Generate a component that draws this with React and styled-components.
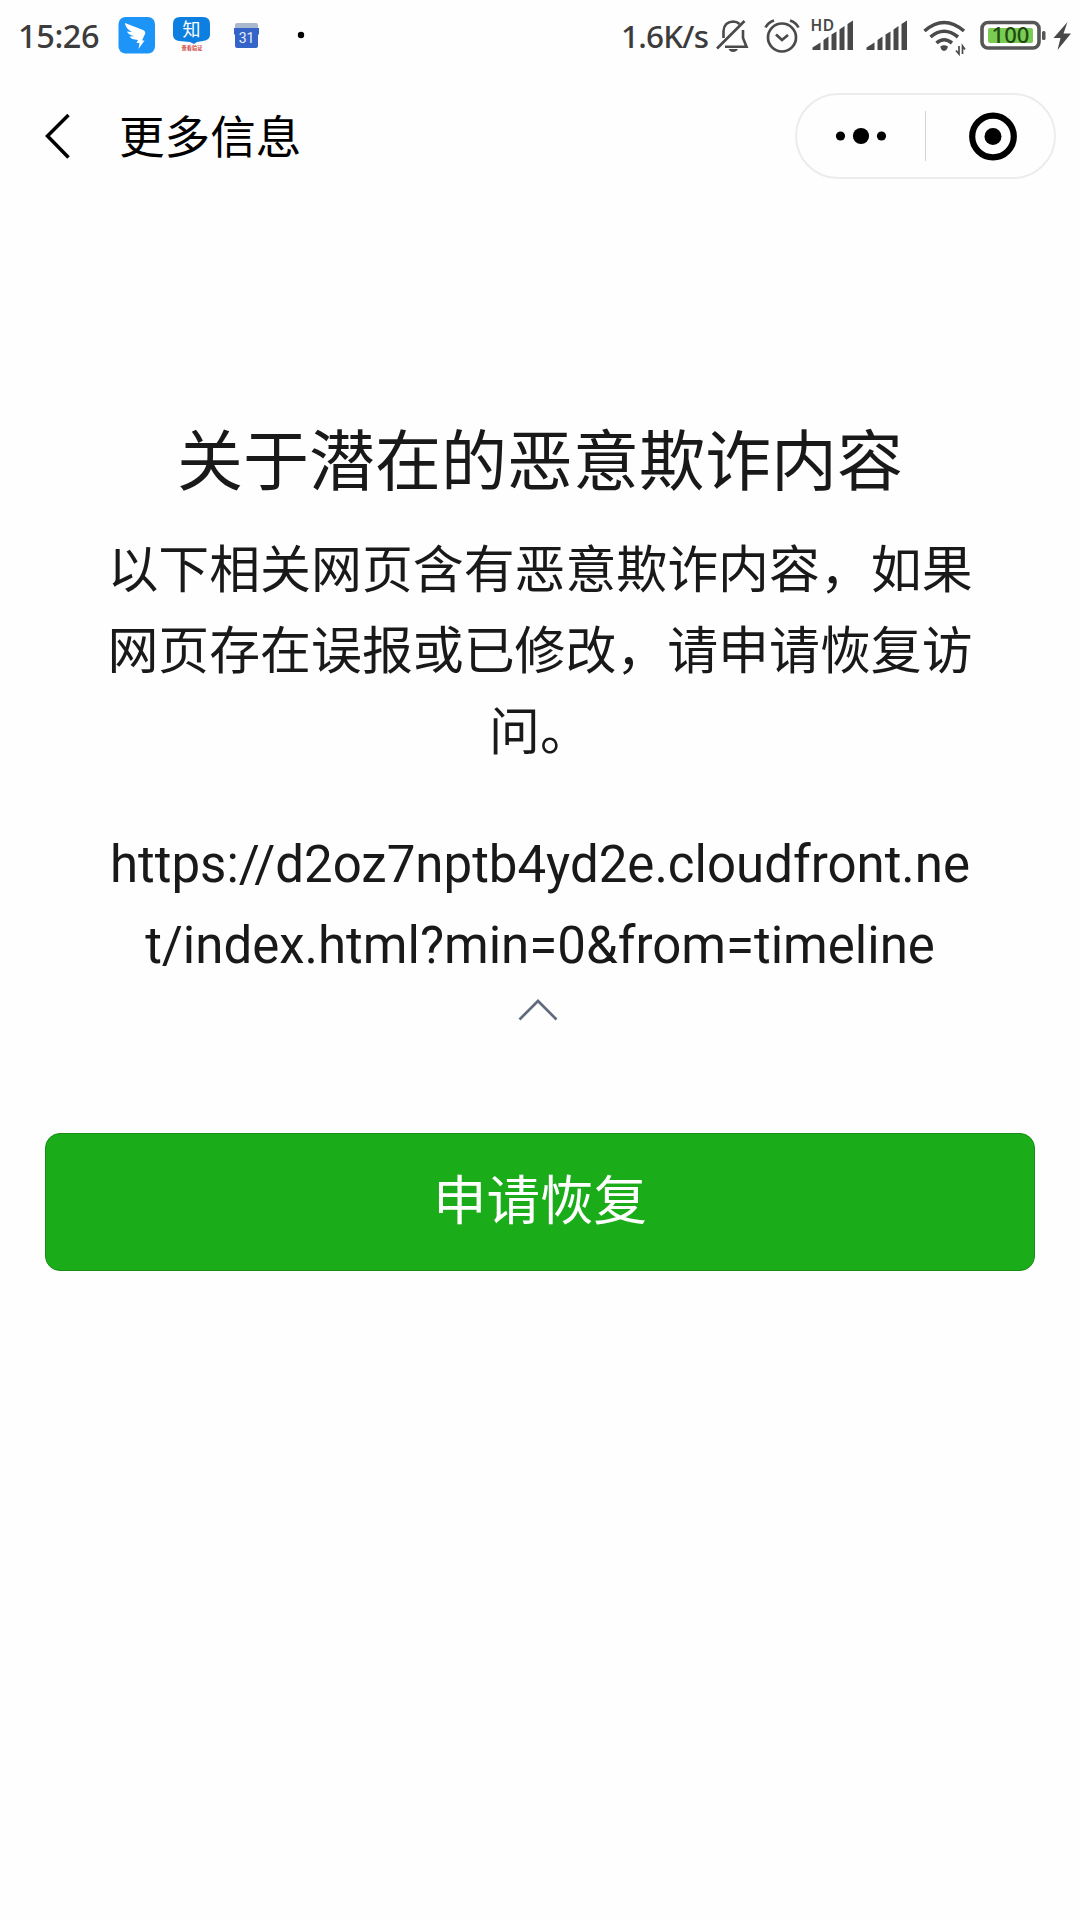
import React from "react";
import styled, { createGlobalStyle } from "styled-components";

const GlobalStyle = createGlobalStyle`
  * { box-sizing: border-box; }
  body { margin: 0; background: #fefefe; }
`;

const cjk = `"Noto Sans CJK SC", sans-serif`;

const Screen = styled.div`
  display: flex;
  flex-direction: column;
  width: 1080px;
  height: 1920px;
  background: #fefefe;
  font-family: Roboto, ${cjk};
  color: #191919;
`;

const StatusBar = styled.div`
  display: flex;
  justify-content: space-between;
  height: 72px;
  padding: 0 8px 0 18px;
`;

const StatusGroup = styled.div`
  display: flex;
  align-items: center;
  height: 72px;
`;

const StatusText = styled.span`
  width: ${(p) => p.$width}px;
  font: 500 ${(p) => p.$size}px/72px "Noto Sans", sans-serif;
  letter-spacing: ${(p) => p.$spacing}px;
  white-space: nowrap;
  color: #3c3c3c;
`;

const Glyph = styled.svg`
  display: block;
  flex: none;
  width: ${(p) => p.$width}px;
  height: 72px;
`;

const NavBar = styled.div`
  display: flex;
  align-items: center;
  height: 128px;
  padding: 0 24px 0 42px;
`;

const BackIcon = styled.svg`
  width: 32px;
  height: 50px;
`;

const NavTitle = styled.div`
  flex: 1;
  padding: 0 0 4px 45px;
  font: 400 45.6px/64px ${cjk};
  color: #000;
`;

const Capsule = styled.div`
  display: flex;
  align-items: center;
  width: 261px;
  height: 86px;
  border: 2px solid #ececec;
  border-radius: 43px;
`;

const CapsuleButton = styled.div`
  display: flex;
  justify-content: center;
  width: ${(p) => p.$width}px;
  padding-left: ${(p) => p.$shift || 0}px;
`;

const Divider = styled.div`
  width: 1px;
  height: 50px;
  background: #d4d4d4;
`;

const Main = styled.main`
  display: flex;
  flex-direction: column;
  align-items: center;
  padding: 208px 45px 0;
`;

const Title = styled.h1`
  margin: 0;
  font: 400 66px/96px ${cjk};
`;

const Message = styled.p`
  margin: 22px 0 0;
  font: 400 50.9px/81px ${cjk};
  text-align: center;
`;

const Line = styled.span`
  display: block;
  white-space: nowrap;
`;

const Url = styled.p`
  margin: 55px 0 0;
  font: 400 51px/81px Roboto, sans-serif;
  text-align: center;
`;

const Collapse = styled.svg`
  width: 42px;
  height: 26px;
  margin: 11px 4px 0 0;
`;

const RestoreButton = styled.button`
  width: 990px;
  height: 138px;
  margin: 110px 0 0;
  padding: 0 0 10px;
  border: 1px solid #178e17;
  border-radius: 15px;
  background: #1aad19;
  color: #fff;
  font: 400 53.5px/80px ${cjk};
`;

function DingTalk() {
  return (
    <Glyph $width={55} viewBox="100 0 55 72">
      <rect x="118.5" y="17" width="36.5" height="36.5" rx="7" fill="#1c94f8" />
      <path d="M125 23 L143 30 Q146 31.500 145 34 L142 40.500 H144.500 L138.500 49 L139.500 43 H136.500 L138 40 Q131 39.500 129.500 36.500 L134 36.300 Q128 34.500 127 31.500 L132 32 Q125 28 125 23Z" fill="#fff" />
    </Glyph>
  );
}

function Zhi() {
  return (
    <Glyph $width={63} viewBox="155 0 63 72">
      <path d="M180 17 H203 Q210 17 210 24 V35 Q210 40 203 41 L197 42 L194 44 L190 42 L179 41 Q173 40 173 35 V24 Q173 17 180 17Z" fill="#0d7fe0" />
      <text x="191.500" y="36" textAnchor="middle" fontSize="18" fontFamily="Noto Sans CJK SC" fill="#fff">知</text>
      <text x="192" y="50" textAnchor="middle" fontSize="5.200" fontWeight="700" fontFamily="Noto Sans CJK SC" fill="#d0473f">查看验证</text>
    </Glyph>
  );
}

function Calendar() {
  return (
    <Glyph $width={50} viewBox="218 0 50 72">
      <rect x="235" y="23" width="23" height="9" rx="2" fill="#a9b7cf" />
      <path d="M234 28 H259 V34 L258 35 V46 Q258 48 256 48 H237 Q235 48 235 46 V35 L234 34Z" fill="#3564c8" />
      <text x="246.500" y="43" textAnchor="middle" fontSize="14" fontFamily="Roboto" fill="#e8eefb">31</text>
    </Glyph>
  );
}

function Dot() {
  return (
    <Glyph $width={40} viewBox="268 0 40 72">
      <circle cx="301" cy="35" r="3.200" fill="#000" />
    </Glyph>
  );
}

function MutedBell() {
  return (
    <Glyph $width={42} viewBox="712 0 42 72" fill="none" stroke="#4a4a4a" strokeWidth="2.600">
      <path d="M723.500 38 V31 Q724 22 733 21.500 Q737 21.500 739.500 24" />
      <path d="M743 30 V38 L746.500 46.700 H725" />
      <path d="M717 48.500 L744.500 21" />
      <path d="M728.500 49 H738 Q736.500 52 733 52 Q730 52 728.500 49Z" fill="#4a4a4a" stroke="none" />
    </Glyph>
  );
}

function Alarm() {
  return (
    <Glyph $width={49} viewBox="754 0 49 72" fill="none" stroke="#4a4a4a" strokeWidth="2.700">
      <circle cx="782" cy="37.500" r="14" />
      <path d="M776 34.500 L782 40 L788 35" />
      <path d="M765.500 27.500 Q768 22.500 774 20.500" />
      <path d="M790 20.500 Q796 22.500 798.500 27.500" />
    </Glyph>
  );
}

function Bars({ hd }) {
  return (
    <Glyph $width={hd ? 53 : 55} viewBox={hd ? "-8 0 53 72" : "-9 0 55 72"} fill="#484848">
      <path d="M1.500 50 V47.500 L9.500 42.500 V50Z" />
      <path d="M12.500 50 V40 L17.500 36.500 V50Z" />
      <path d="M20.500 50 V34.500 L25.500 31.500 V50Z" />
      <path d="M28.500 50 V29.500 L33.500 26 V50Z" />
      <path d="M36.500 50 V24 L42 20.500 V50Z" />
      {hd && (
        <text x="-0.500" y="31.300" fontSize="15.500" fontWeight="600" letterSpacing="0.500" fontFamily="Noto Sans">
          HD
        </text>
      )}
    </Glyph>
  );
}

function Wifi() {
  return (
    <Glyph $width={63} viewBox="911 0 63 72" fill="none" stroke="#4a4a4a" strokeWidth="3.600">
      <path d="M924.500 31 Q944 14 964 31" />
      <path d="M930.500 37 Q944 25.500 958 37" />
      <path d="M936.500 43 Q944 36.500 952 43" />
      <path d="M940.300 46.500 Q944 43.800 948 46.500 Q947 50.500 944 51 Q941 50.500 940.300 46.500Z" fill="#4a4a4a" stroke="none" />
      <path d="M959 46 V54 L956 50.500 M962.500 54 V46 L965 49.500" strokeWidth="1.700" />
    </Glyph>
  );
}

function Battery() {
  return (
    <Glyph $width={98} viewBox="974 0 98 72">
      <rect x="982" y="22.500" width="57" height="25.500" rx="6" fill="#fff" stroke="#565656" strokeWidth="3.600" />
      <rect x="988" y="28" width="45" height="15" rx="2" fill="#7acb52" />
      <text x="1010.500" y="43" textAnchor="middle" fontSize="22" fontWeight="500" fontFamily="Noto Sans" fill="#1d4a12">100</text>
      <rect x="1042" y="31" width="3.500" height="9" rx="1.500" fill="#565656" />
      <path d="M1067.500 22 L1053.500 38 H1060.500 L1057.500 50 L1071 33.500 H1063.500Z" fill="#484848" />
    </Glyph>
  );
}

export default function App() {
  return (
    <Screen>
      <GlobalStyle />
      <StatusBar>
        <StatusGroup>
          <StatusText $width={82} $size={32.5} $spacing={-0.4}>15:26</StatusText>
          <DingTalk />
          <Zhi />
          <Calendar />
          <Dot />
        </StatusGroup>
        <StatusGroup>
          <StatusText $width={91} $size={31.5} $spacing={-0.8}>1.6K/s</StatusText>
          <MutedBell />
          <Alarm />
          <Bars hd />
          <Bars />
          <Wifi />
          <Battery />
        </StatusGroup>
      </StatusBar>
      <NavBar>
        <BackIcon viewBox="0 0 32 50" fill="none" stroke="#000" strokeWidth="3.500">
          <path d="M26.500 4 L5.500 25 L26.500 46.500" />
        </BackIcon>
        <NavTitle>更多信息</NavTitle>
        <Capsule>
          <CapsuleButton $width={128}>
            <svg width="52" height="18" viewBox="0 0 52 18">
              <circle cx="5.500" cy="9" r="4.600" />
              <circle cx="26" cy="9" r="8.100" />
              <circle cx="46.500" cy="9" r="4.600" />
            </svg>
          </CapsuleButton>
          <Divider />
          <CapsuleButton $width={128} $shift={6}>
            <svg width="50" height="50" viewBox="0 0 50 50">
              <circle cx="25" cy="25.500" r="20.800" fill="none" stroke="#000" strokeWidth="6.200" />
              <circle cx="25" cy="25.500" r="8.500" />
            </svg>
          </CapsuleButton>
        </Capsule>
      </NavBar>
      <Main>
        <Title>关于潜在的恶意欺诈内容</Title>
        <Message>
          <Line>以下相关网页含有恶意欺诈内容，如果</Line>
          <Line>网页存在误报或已修改，请申请恢复访</Line>
          <Line>问。</Line>
        </Message>
        <Url>
          <Line>https://d2oz7nptb4yd2e.cloudfront.ne</Line>
          <Line>t/index.html?min=0&amp;from=timeline</Line>
        </Url>
        <Collapse viewBox="0 0 42 26" fill="none" stroke="#5f6a7d" strokeWidth="2.700">
          <path d="M2.500 22.500 L21 4 L39.500 22.500" />
        </Collapse>
        <RestoreButton>申请恢复</RestoreButton>
      </Main>
    </Screen>
  );
}
